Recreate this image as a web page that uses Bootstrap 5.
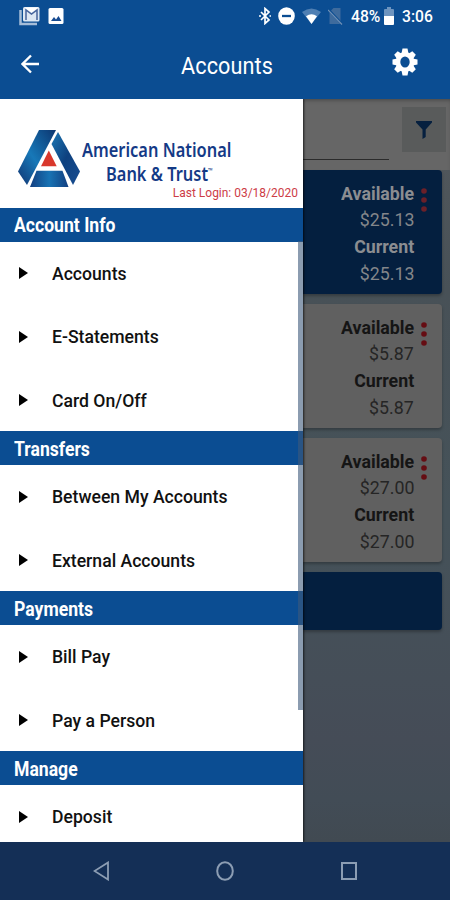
<!DOCTYPE html>
<html lang="en">
<head>
<meta charset="utf-8">
<meta name="viewport" content="width=device-width, initial-scale=1">
<title>Accounts</title>
<link rel="stylesheet" href="https://cdn.jsdelivr.net/npm/bootstrap@5.3.0/dist/css/bootstrap.min.css">
<style>
body{font-family:Roboto,"Liberation Sans",sans-serif;background:#0b4d92}
.phone{width:450px;height:900px;background:#0b4d92}
.status-row{height:32px;padding:0 15px 0 19px}
.status-icons svg + svg{margin-left:7px}
.status-icons .battery{margin-left:1px}
.app-head{height:67px;padding:0 32px 0 21px}
.narrow{display:inline-block;white-space:nowrap;transform:scaleX(.92);transform-origin:left center}
.page-name{font-size:24px;line-height:1;transform-origin:center;transform:scaleX(.9);letter-spacing:.1px;margin-left:22px}
.stat{font-size:17px;line-height:1;font-weight:500;margin-top:1px}
.main-area{height:743px}
.drawer{width:303px;background:#fff;box-shadow:1px 0 2px #000a;z-index:2}
.brand{height:109px;padding:31px 5px 0 18px}
.mark-row{height:56px}
.brand-name{font-family:"Noto Sans","Open Sans",sans-serif;font-weight:600;font-size:19.5px;line-height:24px;color:#143a86;width:166px;padding:8px 0 0 2px}
.brand-name .narrow{display:block;width:fit-content;transform:scaleX(.841)}
.brand-name .second{margin-left:24px}
.tm{font-size:7px;top:-1.1em}
.login-note{font-size:13px;line-height:14px;color:#cd3c46}
.login-note .narrow{transform-origin:right center}
.sect{height:33.5px;background:#0b4d92;color:#fff;font-size:20px;font-weight:700;padding:1px 0 0 14px}
.sect .narrow{transform:scaleX(.88)}
.item{height:63.25px;padding:3.5px 0 0 19px;font-size:18.5px;font-weight:500;color:#111}
.item .narrow{transform:scaleX(.952)}
.item svg{margin-right:24px;margin-top:-3px}
.thumb{width:5px;height:469px;top:142px;right:0;background:#3d5a7c99}
.under{background:linear-gradient(#54595d 0,#485157 190px,#455259 420px,#454e58 580px,#454c57 640px,#424c56 700px,#414a52)}
.search{height:71px;background:#666;padding:8px 4px 0 0;box-shadow:inset 0 3px 4px -2px #0005}
.search-line{width:86px;height:53px;border-bottom:1px solid #2b2b2b}
.filter-btn{width:44px;height:45px;background:#595b5b}
.acct{width:139px;height:124px;margin-bottom:10px;background:#606060;border-radius:0 4px 4px 0;padding:10.5px 15px 0 0;box-shadow:0 2px 3px #0004;color:#252525;font-size:19px;line-height:26.8px}
.acct b{font-weight:700;color:#151515}
.acct .narrow{transform-origin:right center;transform:scaleX(.935)}
.acct.sel,.acct.total{background:#041f3f;color:#83868a}
.acct.sel b{color:#8b8d91}
.acct.total{height:58px}
.dots{margin-left:7px;margin-top:7px}
.nav-foot{height:58px;background:#142f56;padding:0 93px}
</style>
</head>
<body>
<div class="phone overflow-hidden d-flex flex-column text-white">
  <div class="status-row d-flex justify-content-between align-items-center flex-shrink-0">
    <div class="d-flex gap-2 align-items-center">
      <svg width="21" height="20" viewBox="0 0 21 20"><path d="M1.500 4v14H18" fill="none" stroke="#a6bdd8" stroke-width="2.500"/><rect x="4" y="1" width="16.500" height="14.500" rx="1.500" fill="#dce6f2"/><path d="M7 14V4l5.500 4L18 4v10" fill="none" stroke="#46639b" stroke-width="1.500"/><path d="M5.500 1.500l7 5 7-5z" fill="#fff"/></svg>
      <svg width="16" height="18" viewBox="0 0 16 18"><rect y="1" x=".5" width="15" height="16" rx="1.500" fill="#fff"/><path d="M3 14l3-4 2 2.400 2.500-3.400 3 5z" fill="#174b91"/></svg>
    </div>
    <div class="status-icons d-flex align-items-center">
      <svg width="12" height="18" viewBox="0 0 12 18"><path d="M2 5l8 8-4 3.500V1.500L10 5l-8 8" fill="none" stroke="#fff" stroke-width="1.700"/><path d="M0 9h2M10.500 9h1.500" stroke="#fff" stroke-width="1.500"/></svg>
      <svg width="17" height="18" viewBox="0 0 17 18"><ellipse cx="8.500" cy="9" rx="8.300" ry="8.700" fill="#fff"/><path d="M4 9h9" stroke="#0b4d92" stroke-width="2.300"/></svg>
      <svg width="19" height="17" viewBox="0 0 19 17"><path d="M0 4Q9.500-3 19 4L9.500 16z" fill="#4f7fb3"/><path d="M4 8.300q5.500-4 11 0L9.500 16z" fill="#fff"/></svg>
      <svg width="15" height="18" viewBox="0 0 15 18"><path d="M1.500 5L5.500 1h7v16h-11z" fill="#3e6b9d"/><path d="M0 2l14 15" stroke="#0b4d92" stroke-width="2.500"/><path d="M0 3l14 14.500" stroke="#7090b5" stroke-width="1.200"/></svg>
      <span class="narrow stat ms-2">48%</span>
      <svg width="10" height="18" viewBox="0 0 10 18" class="battery"><path d="M0 3q0-1 1-1h2V0h4v2h2q1 0 1 1v6H0z" fill="#6d94bf"/><path d="M0 9h10v8q0 1-1 1H1q-1 0-1-1z" fill="#fff"/></svg>
      <span class="narrow stat ms-2">3:06</span>
    </div>
  </div>
  <header class="app-head d-flex justify-content-between align-items-center flex-shrink-0">
    <svg width="18" height="20" viewBox="0 0 18 20" class="mb-1"><path d="M18 10H2M10 1.500L1.500 10l8.500 8.500" fill="none" stroke="#fff" stroke-width="2.300"/></svg>
    <span class="narrow page-name">Accounts</span>
    <svg width="26" height="28" viewBox="-13 -14 26 28" class="mb-2"><ellipse rx="7" ry="7.800" fill="none" stroke="#fff" stroke-width="4.600"/><g fill="#fff"><path d="M-2.500-13.500h5l1 5h-7zM-2.500 13.500h5l1-5h-7zM-12.500-2.500v5l5 1v-7zM12.500-2.500v5l-5 1v-7z"/><path transform="rotate(45)" d="M-2.500-12.800h5l1 5h-7zM-2.500 12.800h5l1-5h-7zM-12.800-2.500v5l5 1v-7zM12.800-2.500v5l-5 1v-7z"/></g></svg>
  </header>
  <div class="main-area d-flex flex-shrink-0 overflow-hidden">
    <nav class="drawer position-relative flex-shrink-0 overflow-hidden">
      <div class="brand">
        <div class="d-flex mark-row">
          <svg width="62" height="58" viewBox="0 0 62 58" class="flex-shrink-0"><defs><linearGradient id="ga" x1="1" y1="0" x2="0" y2="1"><stop stop-color="#0c356f"/><stop offset=".55" stop-color="#1778b8"/><stop offset="1" stop-color="#123572"/></linearGradient><linearGradient id="gb" x1="0" y1="0" x2="1" y2="1"><stop stop-color="#1c78b5"/><stop offset=".5" stop-color="#0e417f"/><stop offset="1" stop-color="#174c91"/></linearGradient><linearGradient id="gc"><stop stop-color="#123f80"/><stop offset=".5" stop-color="#1873b4"/><stop offset="1" stop-color="#123f80"/></linearGradient></defs><path d="M21 0h17L9 55 0 41.500z" fill="url(#ga)"/><path d="M40 2l22 39.500L55 55 33.500 14z" fill="url(#gb)"/><path d="M18.500 40.700h26L50.500 57H12z" fill="url(#gc)"/><path d="M30.800 20.500l7.900 15.700H23z" fill="#d9382c"/></svg>
          <div class="brand-name"><div class="narrow">American National</div><div class="narrow second">Bank &amp; Trust<sup class="tm">™</sup></div></div>
        </div>
        <div class="login-note text-end"><span class="narrow">Last Login: 03/18/2020</span></div>
      </div>
      <div class="sect d-flex align-items-center"><span class="narrow">Account Info</span></div>
      <div class="item d-flex align-items-center"><svg width="9" height="12"><path d="M0 0l9 6-9 6z"/></svg><span class="narrow">Accounts</span></div>
      <div class="item d-flex align-items-center"><svg width="9" height="12"><path d="M0 0l9 6-9 6z"/></svg><span class="narrow">E-Statements</span></div>
      <div class="item d-flex align-items-center"><svg width="9" height="12"><path d="M0 0l9 6-9 6z"/></svg><span class="narrow">Card On/Off</span></div>
      <div class="sect d-flex align-items-center"><span class="narrow">Transfers</span></div>
      <div class="item d-flex align-items-center"><svg width="9" height="12"><path d="M0 0l9 6-9 6z"/></svg><span class="narrow">Between My Accounts</span></div>
      <div class="item d-flex align-items-center"><svg width="9" height="12"><path d="M0 0l9 6-9 6z"/></svg><span class="narrow">External Accounts</span></div>
      <div class="sect d-flex align-items-center"><span class="narrow">Payments</span></div>
      <div class="item d-flex align-items-center"><svg width="9" height="12"><path d="M0 0l9 6-9 6z"/></svg><span class="narrow">Bill Pay</span></div>
      <div class="item d-flex align-items-center"><svg width="9" height="12"><path d="M0 0l9 6-9 6z"/></svg><span class="narrow">Pay a Person</span></div>
      <div class="sect d-flex align-items-center"><span class="narrow">Manage</span></div>
      <div class="item d-flex align-items-center"><svg width="9" height="12"><path d="M0 0l9 6-9 6z"/></svg><span class="narrow">Deposit</span></div>
      <div class="thumb position-absolute"></div>
    </nav>
    <main class="under flex-grow-1">
      <div class="search d-flex justify-content-between"><div class="search-line"></div>
        <div class="filter-btn d-flex align-items-center justify-content-center"><svg width="16" height="18" viewBox="0 0 16 18"><path d="M0 0h16v1.500L9.700 8.500V16l-3.200 2V8.500L0 1.500z" fill="#06203f"/></svg></div></div>
      <div class="acct sel d-flex justify-content-end"><div class="text-end"><b class="narrow">Available</b><br><span class="narrow">$25.13</span><br><b class="narrow">Current</b><br><span class="narrow">$25.13</span></div><svg class="dots" width="6" height="24" viewBox="0 0 6 24"><g fill="#6b2029"><circle cx="3" cy="3" r="2.800"/><circle cx="3" cy="12" r="2.800"/><circle cx="3" cy="21" r="2.800"/></g></svg></div>
      <div class="acct d-flex justify-content-end"><div class="text-end"><b class="narrow">Available</b><br><span class="narrow">$5.87</span><br><b class="narrow">Current</b><br><span class="narrow">$5.87</span></div><svg class="dots" width="6" height="24" viewBox="0 0 6 24"><g fill="#650d13"><circle cx="3" cy="3" r="2.800"/><circle cx="3" cy="12" r="2.800"/><circle cx="3" cy="21" r="2.800"/></g></svg></div>
      <div class="acct d-flex justify-content-end"><div class="text-end"><b class="narrow">Available</b><br><span class="narrow">$27.00</span><br><b class="narrow">Current</b><br><span class="narrow">$27.00</span></div><svg class="dots" width="6" height="24" viewBox="0 0 6 24"><g fill="#650d13"><circle cx="3" cy="3" r="2.800"/><circle cx="3" cy="12" r="2.800"/><circle cx="3" cy="21" r="2.800"/></g></svg></div>
      <div class="acct total"></div>
    </main>
  </div>
  <footer class="nav-foot d-flex justify-content-between align-items-center flex-shrink-0">
    <svg width="16" height="20" viewBox="0 0 16 20"><path d="M15 1.500v17L1.500 10z" fill="none" stroke="#8c9db3" stroke-width="1.800"/></svg>
    <svg width="18" height="20" viewBox="0 0 18 20"><ellipse cx="9" cy="10" rx="7.800" ry="8.800" fill="none" stroke="#8c9db3" stroke-width="2"/></svg>
    <svg width="16" height="18" viewBox="0 0 16 18"><rect x="1" y="1" width="14" height="16" fill="none" stroke="#8c9db3" stroke-width="2"/></svg>
  </footer>
</div>
<script src="https://cdn.jsdelivr.net/npm/bootstrap@5.3.0/dist/js/bootstrap.bundle.min.js"></script>
</body>
</html>
